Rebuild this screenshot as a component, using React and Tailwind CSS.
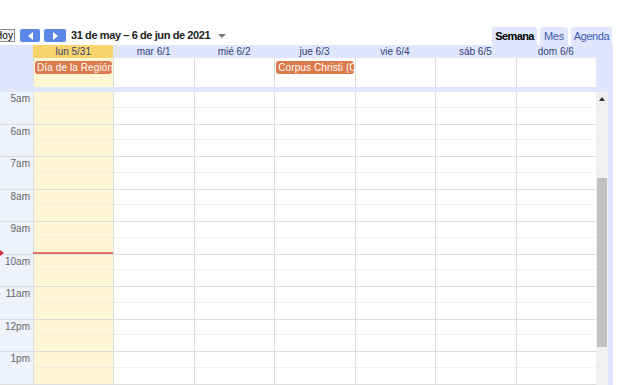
const days = [
  { label: "lun 5/31", today: true },
  { label: "mar 6/1" },
  { label: "mié 6/2" },
  { label: "jue 6/3" },
  { label: "vie 6/4" },
  { label: "sáb 6/5" },
  { label: "dom 6/6" },
];

const hours = ["5am", "6am", "7am", "8am", "9am", "10am", "11am", "12pm", "1pm"];

const allDay = {
  0: "Día de la Región",
  3: "Corpus Christi (Corpus Christi)",
};

function HourRows() {
  return hours.map((h) => (
    <div key={h} className="h-[32.5px] shrink-0 border-b border-[#dddddd]">
      <div className="h-1/2 border-b border-dotted border-[#e6e6e6]" />
    </div>
  ));
}

export default function App() {
  return (
    <div
      className="relative h-[385px] w-[623px] overflow-hidden bg-white"
      style={{ fontFamily: '"Liberation Sans", Arial, sans-serif' }}
    >
      {/* toolbar */}
      <div className="mt-[27px] flex h-[18px] items-start">
        <div className="ml-[-7px] mt-[2px] flex items-center">
          <button className="h-[13px] w-[22px] border border-[#8a8a8a] bg-[#f2f2f2] text-[10px] leading-[11px] text-black">
            Hoy
          </button>
          <button className="ml-[5px] flex h-[13px] w-[20px] items-center justify-center rounded-[2px] bg-[#5b87e6]">
            <span className="h-0 w-0 border-y-[4px] border-r-[5px] border-y-transparent border-r-white" />
          </button>
          <button className="ml-[4px] flex h-[13px] w-[22px] items-center justify-center rounded-[2px] bg-[#5b87e6]">
            <span className="h-0 w-0 border-y-[4px] border-l-[5px] border-y-transparent border-l-white" />
          </button>
          <span className="ml-[5px] text-[11px] font-bold leading-[13px] tracking-[-0.4px] text-[#222]">
            31 de may – 6 de jun de 2021
          </span>
          <span className="ml-[8px] mt-[1px] h-0 w-0 border-x-[4px] border-t-[4px] border-x-transparent border-t-[#777]" />
        </div>
        <div className="ml-auto mr-[11px] flex h-[18px] gap-[3px]">
          <div className="flex w-[45px] items-center justify-center rounded-t-[3px] bg-[#e0e6fc] text-[11px] font-bold tracking-[-0.6px] text-black">
            Semana
          </div>
          <div className="flex w-[28px] items-center justify-center rounded-t-[3px] bg-[#e0e6fc] text-[11px] tracking-[-0.2px] text-[#3f5bb0]">
            Mes
          </div>
          <div className="flex w-[41px] items-center justify-center rounded-t-[3px] bg-[#e0e6fc] text-[11px] tracking-[-0.4px] text-[#3f5bb0]">
            Agenda
          </div>
        </div>
      </div>

      {/* header + all day */}
      <div className="w-[613px] bg-[#e0e6fc]">
        <div className="flex h-[13px]">
          <div className="w-[33px] shrink-0" />
          <div className="grid w-[563px] grid-cols-7">
            {days.map((d) => (
              <div
                key={d.label}
                className={
                  "text-center text-[10px] leading-[13px] text-[#34427a] " +
                  (d.today ? "bg-[#f9d36b]" : "")
                }
              >
                {d.label}
              </div>
            ))}
          </div>
        </div>
        <div className="flex h-[29px]">
          <div className="w-[33px] shrink-0" />
          <div className="grid w-[563px] grid-cols-7 bg-white">
            {days.map((d, i) => (
              <div
                key={d.label}
                className={
                  "overflow-hidden border-l border-[#dddddd] px-[1px] pt-[3px] " +
                  (d.today ? "bg-[#fff6d4]" : "bg-white")
                }
              >
                {allDay[i] && (
                  <div className="h-[13px] overflow-hidden whitespace-nowrap rounded-[3px] bg-[#db7a4b] px-[2px] text-[10px] leading-[13px] tracking-[0.1px] text-white">
                    {allDay[i]}
                  </div>
                )}
              </div>
            ))}
          </div>
        </div>
        <div className="h-[5px]" />
      </div>

      {/* time grid */}
      <div className="relative flex h-[293px] w-[613px] overflow-hidden">
        <div className="w-[33px] shrink-0 bg-[#eef2fb]">
          {hours.map((h) => (
            <div
              key={h}
              className="h-[32.5px] border-b border-[#dddddd] pr-[3px] pt-[1px] text-right text-[10px] leading-[12px] text-[#666]"
            >
              {h}
            </div>
          ))}
        </div>
        <div className="grid w-[563px] shrink-0 grid-cols-7">
          {days.map((d) => (
            <div
              key={d.label}
              className={
                "flex flex-col border-l border-[#dddddd] " +
                (d.today ? "bg-[#fff6d6]" : "bg-white")
              }
            >
              <HourRows />
            </div>
          ))}
        </div>
        <div className="flex w-[12px] shrink-0 flex-col bg-[#f1f1f1]">
          <div className="flex h-[12px] items-center justify-center pt-[2px]">
            <span className="h-0 w-0 border-x-[3px] border-b-[4px] border-x-transparent border-b-[#333]" />
          </div>
          <div className="mx-[1px] mt-[74px] h-[169px] bg-[#c1c1c1]" />
        </div>
        <div className="w-[5px] shrink-0 bg-[#e0e6fc]" />

        {/* current time */}
        <div className="absolute left-[33px] top-[160px] h-[2px] w-[80px] bg-[#dd7766]" />
        <span className="absolute left-0 top-[158px] h-0 w-0 border-y-[3px] border-l-[4px] border-y-transparent border-l-[#cc3333]" />
      </div>
    </div>
  );
}
